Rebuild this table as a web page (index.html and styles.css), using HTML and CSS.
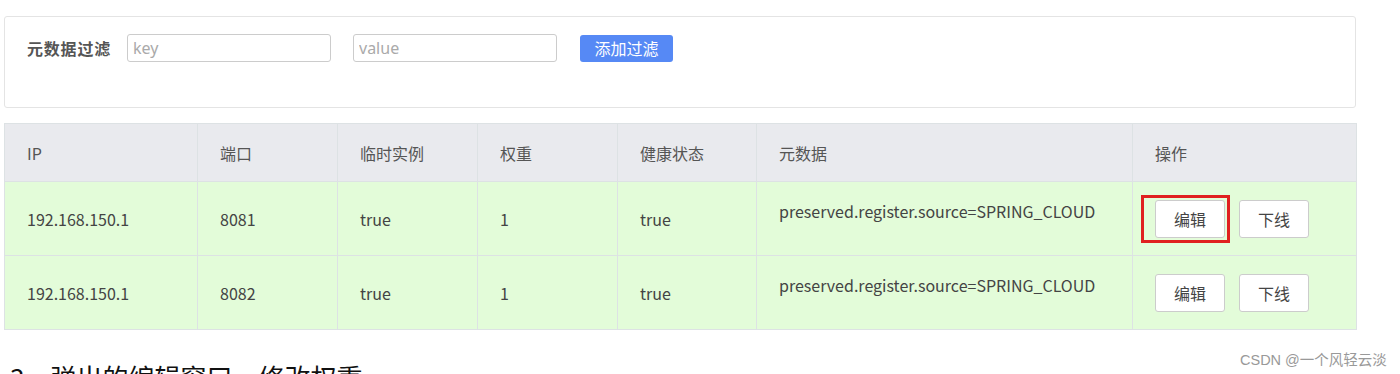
FILE: index.html
```html
<!DOCTYPE html>
<html lang="zh-CN">
<head>
<meta charset="utf-8">
<title>Instances</title>
<link rel="stylesheet" href="styles.css">
</head>
<body>
<div class="page">
  <div class="filter-card">
    <div class="filter-row">
      <span class="filter-label">元数据过滤</span>
      <input class="filter-input" type="text" placeholder="key">
      <input class="filter-input" type="text" placeholder="value">
      <button class="btn-primary">添加过滤</button>
    </div>
  </div>

  <table class="inst-table">
    <colgroup>
      <col class="c-ip"><col class="c-port"><col class="c-eph"><col class="c-weight"><col class="c-health"><col class="c-meta"><col class="c-op">
    </colgroup>
    <thead>
      <tr>
        <th>IP</th><th>端口</th><th>临时实例</th><th>权重</th><th>健康状态</th><th>元数据</th><th>操作</th>
      </tr>
    </thead>
    <tbody>
      <tr>
        <td>192.168.150.1</td><td>8081</td><td>true</td><td>1</td><td>true</td>
        <td class="meta">preserved.register.source=SPRING_CLOUD</td>
        <td class="ops">
          <div class="op-group">
            <span class="mark-wrap"><button class="btn">编辑</button><span class="red-mark"></span></span>
            <button class="btn">下线</button>
          </div>
        </td>
      </tr>
      <tr>
        <td>192.168.150.1</td><td>8082</td><td>true</td><td>1</td><td>true</td>
        <td class="meta">preserved.register.source=SPRING_CLOUD</td>
        <td class="ops">
          <div class="op-group">
            <button class="btn">编辑</button>
            <button class="btn">下线</button>
          </div>
        </td>
      </tr>
    </tbody>
  </table>

  <p class="caption">3、弹出的编辑窗口，修改权重</p>
  <span class="watermark">CSDN @一个风轻云淡</span>
</div>
</body>
</html>
```

FILE: styles.css
```css
* { box-sizing: border-box; }
html, body { margin: 0; padding: 0; background: #fff; }
body {
  font-family: "Noto Sans CJK SC", "Noto Sans", sans-serif;
  color: #333;
  overflow: hidden;
  height: 374px;
}
.page {
  position: relative;
  padding: 16px 0 0 4px;
  width: 1400px;
  height: 374px;
}
.filter-card {
  width: 1352px;
  height: 92px;
  border: 1px solid #e4e4e4;
  border-radius: 3px;
  padding: 17px 0 0 22px;
}
.filter-row {
  display: flex;
  align-items: center;
  height: 28px;
}
.filter-label {
  font-size: 16px;
  font-weight: 700;
  color: #555;
  margin-right: 16px;
  letter-spacing: 0.8px;
}
.filter-input {
  width: 204px;
  height: 28px;
  border: 1px solid #ccc;
  border-radius: 3px;
  padding: 0 5px;
  font-family: "Noto Sans", sans-serif;
  font-size: 16px;
  color: #333;
  margin-right: 22px;
  outline: none;
}
.filter-input::placeholder { color: #aaa; }
.btn-primary {
  height: 27px;
  width: 93px;
  margin-left: 1px;
  background: #5689f5;
  border: none;
  border-radius: 3px;
  color: #fff;
  font-family: "Noto Sans CJK SC", sans-serif;
  font-size: 16px;
  padding: 0;
}
.inst-table {
  margin-top: 15px;
  width: 1352px;
  border-collapse: collapse;
  table-layout: fixed;
  font-size: 16px;
}
.c-ip { width: 193px; }
.c-port, .c-eph, .c-weight { width: 140px; }
.c-health { width: 139px; }
.c-meta { width: 376px; }
.c-op { width: 224px; }
.inst-table th, .inst-table td {
  border: 1px solid #dde2e4;
  text-align: left;
  padding: 0 0 0 22px;
  font-weight: 400;
  color: #444;
}
.inst-table th {
  height: 58px;
  background: #e9eaee;
  color: #555;
}
.inst-table td {
  height: 74px;
  background: #e3fcd9;
  vertical-align: middle;
}
.inst-table td.meta {
  vertical-align: top;
  padding-top: 18px;
  line-height: 22px;
}
.inst-table td.ops { padding-left: 22px; }
.op-group {
  display: flex;
  align-items: center;
  gap: 14px;
}
.mark-wrap {
  position: relative;
  display: inline-flex;
}
.btn {
  width: 70px;
  height: 38px;
  background: #fff;
  border: 1px solid #ccc;
  border-radius: 3px;
  font-family: "Noto Sans CJK SC", sans-serif;
  font-size: 16px;
  color: #444;
  padding: 0;
}
.red-mark {
  position: absolute;
  left: -14px;
  top: -5px;
  width: 89px;
  height: 48px;
  border: 3px solid #e0201f;
}
.caption {
  margin: 30px 0 0 6px;
  font-size: 26px;
  line-height: 34px;
  color: #111;
  font-weight: 400;
}
.watermark {
  position: absolute;
  left: 1240px;
  top: 348px;
  font-size: 14.5px;
  color: #999;
  font-family: "Liberation Sans", "Noto Sans CJK SC", sans-serif;
}
```
